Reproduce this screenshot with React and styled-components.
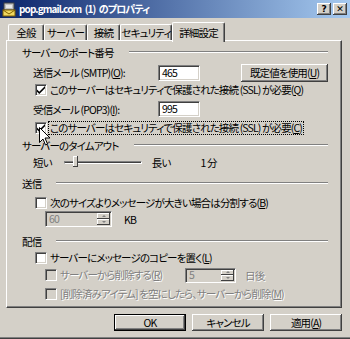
import React from 'react';
import styled, { createGlobalStyle } from 'styled-components';

const Global = createGlobalStyle`
  html, body { margin: 0; padding: 0; background: #d4d0c8; }
  body {
    font-family: "Noto Sans CJK JP", "Noto Sans", sans-serif;
    font-size: 10.5px;
    letter-spacing: -0.85px;
    color: #000;
  }
  * { box-sizing: border-box; }
`;

const Window = styled.div`
  position: relative;
  width: 350px;
  height: 339px;
  background: #d4d0c8;
  display: flex;
  flex-direction: column;
  overflow: hidden;
  font-feature-settings: "palt";
  box-shadow: inset 0 -1px #404040, inset 0 -2px #808080;
`;

const TitleBar = styled.div`
  height: 18px;
  display: flex;
  align-items: center;
  padding: 0 3px 0 2px;
  background: linear-gradient(to right, #0a246a, #a6caf0);
`;

const TitleText = styled.span`
  flex: 1;
  margin-left: 2px;
  color: #fff;
  font-weight: bold;
  font-size: 10px;
  letter-spacing: -0.9px;
  word-spacing: 2px;
  line-height: 18px;
  white-space: nowrap;
`;

const CaptionButton = styled.div`
  width: 14px;
  height: 12px;
  margin-left: ${p => p.gap || 0}px;
  background: #d4d0c8;
  display: flex;
  align-items: center;
  justify-content: center;
  font: bold 9px "DejaVu Sans", sans-serif;
  letter-spacing: 0;
  color: #000;
  box-shadow: inset -1px -1px #404040, inset 1px 1px #fff, inset -2px -2px #808080;
`;

const Tabs = styled.div`
  display: flex;
  align-items: flex-end;
  height: 22px;
  padding-left: 8px;
  position: relative;
  z-index: 1;
`;

const Tab = styled.div`
  width: ${p => p.w}px;
  height: ${p => (p.active ? 20 : 16)}px;
  margin-bottom: ${p => (p.active ? -2 : 0)}px;
  background: #d4d0c8;
  display: flex;
  align-items: ${p => (p.active ? 'flex-start' : 'center')};
  padding-top: ${p => (p.active ? 2 : 0)}px;
  justify-content: center;
  border-top: 1px solid #fff;
  border-left: 1px solid #fff;
  border-right: 1px solid #404040;
  border-radius: 2px 2px 0 0;
  box-shadow: inset -1px 0 #808080;
  white-space: nowrap;
`;

const Panel = styled.div`
  margin-left: 6px;
  width: 336px;
  height: 268px;
  border-top: 1px solid #fff;
  border-left: 1px solid #fff;
  border-right: 1px solid #404040;
  border-bottom: 1px solid #404040;
  box-shadow: inset -1px -1px #808080;
  display: flex;
  flex-direction: column;
  padding-top: 4px;
`;

const Header = styled.div`
  height: 14px;
  margin-top: ${p => p.mt || 0}px;
  padding: 0 13px 0 15px;
  display: flex;
  align-items: center;
  white-space: nowrap;
`;

const Etch = styled.div`
  flex: 1;
  margin-left: 15px;
  border-top: 1px solid #808080;
  border-bottom: 1px solid #fff;
`;

const Row = styled.div`
  height: ${p => p.h}px;
  margin-top: ${p => p.mt || 0}px;
  padding-left: ${p => p.pl}px;
  display: flex;
  align-items: center;
  white-space: nowrap;
`;

const Label = styled.span`
  width: ${p => (p.w ? `${p.w}px` : 'auto')};
  margin-left: ${p => p.ml || 0}px;
  color: ${p => (p.disabled ? '#808080' : '#000')};
  text-shadow: ${p => (p.disabled ? '1px 1px #fff' : 'none')};
  flex-shrink: 0;
`;

const Field = styled.div`
  width: ${p => p.w}px;
  height: ${p => p.h || 16}px;
  background: ${p => (p.disabled ? '#d4d0c8' : '#fff')};
  color: ${p => (p.disabled ? '#808080' : '#000')};
  border-top: 1px solid #808080;
  border-left: 1px solid #808080;
  border-right: 1px solid #fff;
  border-bottom: 1px solid #fff;
  box-shadow: inset 1px 1px #404040, inset -1px -1px #d4d0c8;
  padding-left: 3px;
  line-height: 14px;
  display: flex;
  align-items: center;
  flex-shrink: 0;
`;

const FieldValue = styled.span`
  flex: 1;
`;

const Spin = styled.div`
  width: 13px;
  height: ${p => p.h}px;
  margin-right: 1px;
  display: flex;
  flex-direction: column;
`;

const SpinHalf = styled.div`
  flex: 1;
  background: #d4d0c8;
  box-shadow: inset -1px -1px #404040, inset 1px 1px #fff;
  display: flex;
  align-items: center;
  justify-content: center;
`;

const Arrow = styled.div`
  width: 0;
  height: 0;
  border-left: 2px solid transparent;
  border-right: 2px solid transparent;
  ${p => (p.up ? 'border-bottom' : 'border-top')}: 2px solid #808080;
`;

const Button = styled.div`
  width: ${p => p.w}px;
  height: ${p => p.h || 18}px;
  margin-left: ${p => p.ml || 0}px;
  background: #d4d0c8;
  display: flex;
  align-items: center;
  justify-content: center;
  white-space: nowrap;
  flex-shrink: 0;
  border: ${p => (p.isDefault ? '1px solid #000' : 'none')};
  box-shadow: inset -1px -1px #404040, inset 1px 1px #fff, inset -2px -2px #808080;
`;

const Box = styled.div`
  width: 12px;
  height: 12px;
  flex-shrink: 0;
  background: ${p => (p.disabled ? '#d4d0c8' : '#fff')};
  border-top: 1px solid #808080;
  border-left: 1px solid #808080;
  border-right: 1px solid #fff;
  border-bottom: 1px solid #fff;
  box-shadow: inset 1px 1px #404040, inset -1px -1px #d4d0c8;
  display: flex;
  align-items: center;
  justify-content: center;
`;

const CheckText = styled.span`
  width: ${p => (p.w ? `${p.w}px` : 'auto')};
  flex-shrink: 0;
  margin-left: 1px;
  padding: 0 1px;
  border: 1px ${p => (p.focused ? 'dotted #000' : 'solid transparent')};
  color: ${p => (p.disabled ? '#808080' : '#000')};
  text-shadow: ${p => (p.disabled ? '1px 1px #fff' : 'none')};
  line-height: 12px;
`;

const SliderArea = styled.div`
  position: relative;
  width: 78px;
  height: 14px;
  margin-left: 12px;
  flex-shrink: 0;
`;

const Track = styled.div`
  position: absolute;
  left: 0;
  right: 0;
  top: 6px;
  height: 3px;
  border-top: 1px solid #808080;
  border-left: 1px solid #808080;
  border-bottom: 1px solid #fff;
  border-right: 1px solid #fff;
  background: #404040;
`;

const Thumb = styled.div`
  position: absolute;
  left: 9px;
  top: 1px;
  width: 5px;
  height: 11px;
  background: #d4d0c8;
  box-shadow: inset -1px -1px #404040, inset 1px 1px #fff;
`;

const Footer = styled.div`
  display: flex;
  justify-content: flex-end;
  padding-right: 8px;
  margin-top: 6px;
`;

const Cursor = styled.svg`
  position: absolute;
  left: 39px;
  top: 127px;
`;

const Check = () => (
  <svg width="8" height="8" viewBox="0 0 7 7">
    <path d="M0 3 L2 5 L7 0 L7 2 L2 7 L0 5 Z" fill="#000" />
  </svg>
);

const CheckRow = ({ checked, disabled, focused, children, pl, mt }) => (
  <Row h={15} pl={pl} mt={mt}>
    <Box disabled={disabled}>{checked && <Check />}</Box>
    <CheckText disabled={disabled} focused={focused}>{children}</CheckText>
  </Row>
);

const SpinBox = ({ value, w, h = 16 }) => (
  <Field w={w} h={h} disabled>
    <FieldValue>{value}</FieldValue>
    <Spin h={h - 4}>
      <SpinHalf><Arrow up /></SpinHalf>
      <SpinHalf><Arrow /></SpinHalf>
    </Spin>
  </Field>
);

const AppIcon = () => (
  <svg width="15" height="15" viewBox="0 0 15 15">
    <rect x="2" y="1" width="10" height="7" fill="#c0c0c0" stroke="#404040" />
    <rect x="4" y="3" width="6" height="3" fill="#e8e8e8" />
    <rect x="1" y="8" width="12" height="6" fill="#f0d860" stroke="#806000" />
    <path d="M1 8 L7 12 L13 8" fill="none" stroke="#806000" />
  </svg>
);

export default function App() {
  return (
    <Window>
      <Global />
      <TitleBar>
        <AppIcon />
        <TitleText>pop.gmail.com (1) のプロパティ</TitleText>
        <CaptionButton>?</CaptionButton>
        <CaptionButton gap={2}>✕</CaptionButton>
      </TitleBar>

      <Tabs>
        <Tab w={36}>全般</Tab>
        <Tab w={43}>サーバー</Tab>
        <Tab w={33}>接続</Tab>
        <Tab w={52}>セキュリティ</Tab>
        <Tab w={53} active>詳細設定</Tab>
      </Tabs>

      <Panel>
        <Header>サーバーのポート番号<Etch /></Header>
        <Row h={19} mt={4} pl={26}>
          <Label w={125}>送信メール (SMTP)(<u>O</u>):</Label>
          <Field w={42}>465</Field>
          <Button w={87} ml={41}>既定値を使用(<u>U</u>)</Button>
        </Row>
        <CheckRow checked pl={28}>
          このサーバーはセキュリティで保護された接続 (SSL) が必要(<u>Q</u>)
        </CheckRow>
        <Row h={18} mt={3} pl={26}>
          <Label w={125}>受信メール (POP3)(<u>I</u>):</Label>
          <Field w={42}>995</Field>
        </Row>
        <CheckRow checked focused pl={28} mt={2}>
          このサーバーはセキュリティで保護された接続 (SSL) が必要(<u>C</u>)
        </CheckRow>

        <Header mt={3}>サーバーのタイムアウト<Etch /></Header>
        <Row h={16} mt={2} pl={26}>
          <Label>短い</Label>
          <SliderArea>
            <Track />
            <Thumb />
          </SliderArea>
          <Label ml={10}>長い</Label>
          <Label ml={30}>1 分</Label>
        </Row>

        <Header mt={6}>送信<Etch /></Header>
        <CheckRow pl={28} mt={5}>
          次のサイズよりメッセージが大きい場合は分割する(<u>B</u>)
        </CheckRow>
        <Row h={16} mt={1} pl={38}>
          <SpinBox value="60" w={67} />
          <Label ml={12}>KB</Label>
        </Row>

        <Header mt={7}>配信<Etch /></Header>
        <CheckRow pl={28} mt={2}>
          サーバーにメッセージのコピーを置く(<u>L</u>)
        </CheckRow>
        <Row h={16} mt={2} pl={38}>
          <Box disabled />
          <CheckText disabled w={127}>サーバーから削除する(<u>R</u>)</CheckText>
          <SpinBox value="5" w={51} h={15} />
          <Label disabled ml={9}>日後</Label>
        </Row>
        <CheckRow disabled pl={38} mt={3}>
          [削除済みアイテム] を空にしたら、サーバーから削除(<u>M</u>)
        </CheckRow>
      </Panel>

      <Footer>
        <Button w={72} h={17} isDefault>OK</Button>
        <Button w={72} h={17} ml={6}>キャンセル</Button>
        <Button w={72} h={17} ml={6}>適用(<u>A</u>)</Button>
      </Footer>

      <Cursor width="12" height="19" viewBox="0 0 12 19">
        <path d="M0.5 0.5 L0.5 15.5 L4 12 L6.5 18 L8.5 17 L6 11 L11 11 Z"
          fill="#fff" stroke="#000" strokeWidth="1" />
      </Cursor>
    </Window>
  );
}
